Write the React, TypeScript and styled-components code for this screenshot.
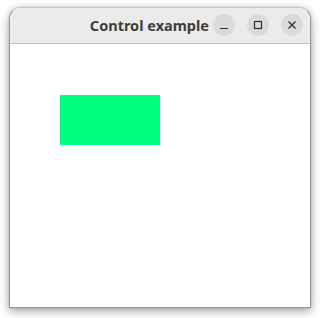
import React from "react";
import styled, { createGlobalStyle } from "styled-components";

const Global = createGlobalStyle`
  html, body { margin: 0; padding: 0; background: #ffffff; }
  body { width: 320px; height: 318px; overflow: hidden; }
`;

const Page = styled.div`
  width: 320px;
  height: 318px;
  box-sizing: border-box;
  padding: 7px 0 0 9px;
  background: #ffffff;
`;

const Window = styled.div`
  width: 302px;
  height: 301px;
  box-sizing: border-box;
  border: 1px solid #9a9a9a;
  border-top-color: #c8c8c8;
  border-radius: 12px 12px 0 0;
  background: #ffffff;
  box-shadow: 0 3px 10px rgba(0, 0, 0, 0.38), 0 0 2px rgba(0, 0, 0, 0.2);
  display: flex;
  flex-direction: column;
  overflow: hidden;
`;

const TitleBar = styled.div`
  height: 36px;
  flex: none;
  box-sizing: border-box;
  background: #ebebeb;
  border-bottom: 1px solid #c0c0c0;
  display: flex;
  align-items: center;
  justify-content: flex-end;
  padding: 0 7px 1px 0;
`;

const Title = styled.div`
  font-family: "Noto Sans", "DejaVu Sans", sans-serif;
  font-weight: 700;
  font-size: 14.5px;
  color: #3d3d3d;
  margin-right: 4px;
  white-space: nowrap;
`;

const Buttons = styled.div`
  display: flex;
  align-items: center;
  gap: 12px;
`;

const WinButton = styled.div`
  width: 22px;
  height: 22px;
  border-radius: 50%;
  background: #dadada;
  display: flex;
  align-items: center;
  justify-content: center;
  color: #2e2e2e;
`;

const Content = styled.div`
  flex: 1;
  padding: 51px 0 0 50px;
`;

const GreenBox = styled.div`
  width: 100px;
  height: 50px;
  background: #00ff7f;
`;

export default function App() {
  return (
    <>
      <Global />
      <Page>
        <Window>
          <TitleBar>
            <Title>Control example</Title>
            <Buttons>
              <WinButton>
                <svg width="10" height="10" viewBox="0 0 10 10">
                  <path d="M1 8.5h8" stroke="currentColor" strokeWidth="1.2" fill="none" />
                </svg>
              </WinButton>
              <WinButton>
                <svg width="10" height="10" viewBox="0 0 10 10">
                  <rect x="1.5" y="1.5" width="7" height="7" stroke="currentColor" strokeWidth="1.2" fill="none" />
                </svg>
              </WinButton>
              <WinButton>
                <svg width="10" height="10" viewBox="0 0 10 10">
                  <path d="M1.5 1.5l7 7M8.5 1.5l-7 7" stroke="currentColor" strokeWidth="1.3" fill="none" />
                </svg>
              </WinButton>
            </Buttons>
          </TitleBar>
          <Content>
            <GreenBox />
          </Content>
        </Window>
      </Page>
    </>
  );
}
